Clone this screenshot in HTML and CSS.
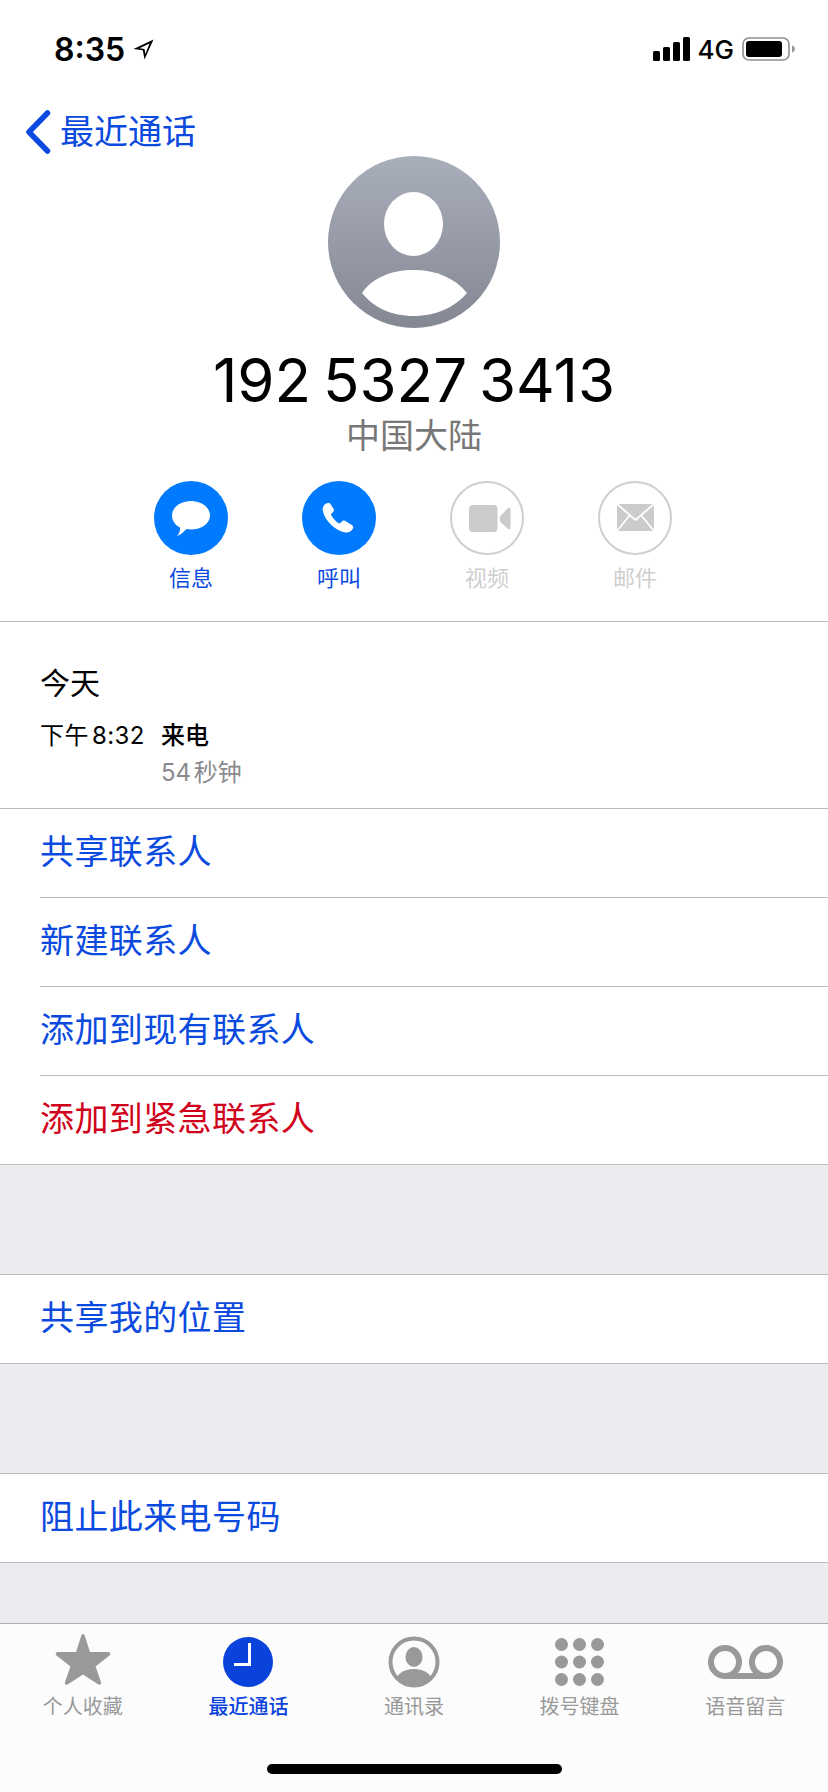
FILE: index.html
```html
<!DOCTYPE html>
<html lang="zh-CN">
<head>
    <meta charset="UTF-8">
    <title>最近通话</title>
    <link rel="stylesheet" href="styles.css">
</head>
<body>
    <div class="page">
        <div class="status-bar">
            <div class="status-left">
                <span class="clock">8:35</span>
                <svg class="loc" width="21" height="21" viewBox="0 0 21 21"><path d="M20.500 .5 L.5 10 L9.800 11.200 L11.500 20.500 Z M16.500 4.500 L6.500 9.300 L11.500 9.900 L12.400 15 Z" fill="#000" fill-rule="evenodd"/></svg>
            </div>
            <div class="status-right">
                <svg width="37" height="24" viewBox="0 0 37 24"><rect x="0" y="14" width="7" height="10" rx="1.5"/><rect x="10" y="10" width="7" height="14" rx="1.5"/><rect x="20" y="5" width="7" height="19" rx="1.5"/><rect x="30" y="0" width="7" height="24" rx="1.5"/></svg>
                <span class="net">4G</span>
                <svg width="53" height="24" viewBox="0 0 53 24"><rect x="1" y="1" width="46" height="22" rx="6" fill="none" stroke="#8e8e8e" stroke-width="1.6"/><rect x="4" y="4" width="36" height="16" rx="3"/><path d="M50 8.500 c2 .6 3 2 3 3.500 s-1 2.900-3 3.500z" fill="#9a9a9a"/></svg>
            </div>
        </div>

        <div class="nav">
            <svg width="26" height="44" viewBox="0 0 26 44"><path d="M22.500 3 L4 22 L22.500 41" fill="none" stroke="#0a4adf" stroke-width="5.500" stroke-linecap="round" stroke-linejoin="round"/></svg>
            <span class="nav-title">最近通话</span>
        </div>

        <div class="header">
            <svg class="avatar" width="172" height="172" viewBox="0 0 172 172">
                <defs>
                    <linearGradient id="avatarBg" x1="0" y1="0" x2="0" y2="1">
                        <stop offset="0" stop-color="#a9aebb"/>
                        <stop offset="1" stop-color="#848893"/>
                    </linearGradient>
                </defs>
                <circle cx="86" cy="86" r="86" fill="url(#avatarBg)"/>
                <ellipse cx="85.500" cy="68" rx="29.500" ry="32" fill="#fff"/>
                <path d="M34 137 C44 122 63 114 85.500 114 C108 114 127 122 139 137 C127 151 108 160 85.500 160 C63 160 45 151 34 137 Z" fill="#fff"/>
            </svg>
            <div class="number">192 5327 3413</div>
            <div class="region">中国大陆</div>
            <div class="actions">
                <div class="action">
                    <svg width="74" height="74" viewBox="0 0 74 74"><circle cx="37" cy="37" r="37" fill="#007aff"/><path d="M37 20 C47.500 20 56 26.500 56 34.500 C56 42.500 47.500 48.500 37 48.500 C35.500 48.500 34 48.400 32.500 48.100 C30 50.500 26.500 54.500 23 54.800 C25 52.800 26.500 49.500 26 46.500 C21 44 18 39.500 18 34.500 C18 26.500 26.500 20 37 20 Z" fill="#fff"/></svg>
                    <span class="action-label">信息</span>
                </div>
                <div class="action">
                    <svg width="74" height="74" viewBox="0 0 74 74"><circle cx="37" cy="37" r="37" fill="#007aff"/><path d="M25 22.500 c1.500-.8 3-.3 3.800 1 l2.700 4.200 c.7 1.100 .5 2.400 -.4 3.300 l-1.600 1.500 c-.5 .5 -.5 1.100 -.2 1.700 c1.600 3 4.500 6.300 7.400 8 c.6 .3 1.200 .2 1.700 -.3 l1.500 -1.500 c.9 -.9 2.200 -1 3.300 -.4 l6.700 4 c1.300 .8 1.700 2.400 .9 3.700 c-1.500 2.600 -4 4.300 -7.500 3.800 c-10 -1.500 -20.500 -12 -22.500 -21.500 c-.7 -3.300 1.200 -6.400 3.600 -7.700 z" fill="#fff"/></svg>
                    <span class="action-label">呼叫</span>
                </div>
                <div class="action off">
                    <svg width="74" height="74" viewBox="0 0 74 74"><circle cx="37" cy="37" r="36" fill="#fff" stroke="#cfcfcf" stroke-width="2"/><rect x="19" y="24" width="28.500" height="27" rx="4" fill="#cbcbcd"/><path d="M50 35.500 L57.500 27.500 C59 26 60.500 27 60.500 28.500 V46.500 C60.500 48 59 49 57.500 47.500 L50 40.500 Z" fill="#cbcbcd"/></svg>
                    <span class="action-label">视频</span>
                </div>
                <div class="action off">
                    <svg width="74" height="74" viewBox="0 0 74 74"><circle cx="37" cy="37" r="36" fill="#fff" stroke="#cfcfcf" stroke-width="2"/><rect x="19" y="23" width="37" height="27" fill="#cbcbcd"/><path d="M19 23 L37.500 39 L56 23 M19 50 L31.500 34.500 M56 50 L43.500 34.500" fill="none" stroke="#fff" stroke-width="1.800"/></svg>
                    <span class="action-label">邮件</span>
                </div>
            </div>
        </div>

        <div class="history">
            <div class="history-date">今天</div>
            <div class="history-row">
                <span class="history-time">下午 8:32</span>
                <div>
                    <div class="history-type">来电</div>
                    <div class="history-len">54 秒钟</div>
                </div>
            </div>
        </div>

        <div class="list">
            <div class="row"><div class="row-text">共享联系人</div></div>
            <div class="row"><div class="row-text">新建联系人</div></div>
            <div class="row"><div class="row-text">添加到现有联系人</div></div>
            <div class="row"><div class="row-text danger">添加到紧急联系人</div></div>
        </div>
        <div class="gap"></div>
        <div class="list">
            <div class="row"><div class="row-text">共享我的位置</div></div>
        </div>
        <div class="gap"></div>
        <div class="list">
            <div class="row"><div class="row-text">阻止此来电号码</div></div>
        </div>
        <div class="gap gap-last"></div>

        <div class="tabbar">
            <div class="tabs">
                <div class="tab">
                    <div class="tab-icon">
                        <svg class="star" width="56" height="52" viewBox="0 0 56 52"><path d="M28 0 C29 0 29.600 1 30 2.500 L35 18 L52.500 18 C55.500 18 56 20 54.500 21.500 L40.500 32.500 L46 48 C46.700 50.300 45 51.500 43 50.300 L28 40.500 L13 50.300 C11 51.500 9.300 50.300 10 48 L15.500 32.500 L1.500 21.500 C0 20 .5 18 3.500 18 L21 18 L26 2.500 C26.400 1 27 0 28 0 Z" fill="#999"/></svg>
                    </div>
                    <span class="tab-label">个人收藏</span>
                </div>
                <div class="tab active">
                    <div class="tab-icon">
                        <svg width="50" height="50" viewBox="0 0 50 50"><circle cx="25" cy="25" r="25" fill="#0a43dc"/><path d="M26.500 6 V27.500 H11" fill="none" stroke="#fff" stroke-width="3"/></svg>
                    </div>
                    <span class="tab-label">最近通话</span>
                </div>
                <div class="tab">
                    <div class="tab-icon">
                        <svg width="52" height="52" viewBox="0 0 52 52"><defs><clipPath id="ringClip"><circle cx="26" cy="26" r="23"/></clipPath></defs><circle cx="26" cy="26" r="23.500" fill="none" stroke="#999" stroke-width="4"/><ellipse cx="26" cy="21" rx="8.500" ry="10" fill="#999"/><ellipse cx="26" cy="47" rx="19" ry="14" fill="#999" clip-path="url(#ringClip)"/></svg>
                    </div>
                    <span class="tab-label">通讯录</span>
                </div>
                <div class="tab">
                    <div class="tab-icon">
                        <svg width="49" height="48" viewBox="0 0 49 48"><g fill="#999"><circle cx="6.500" cy="6.500" r="6.500"/><circle cx="24.500" cy="6.500" r="6.500"/><circle cx="42.500" cy="6.500" r="6.500"/><circle cx="6.500" cy="24" r="6.500"/><circle cx="24.500" cy="24" r="6.500"/><circle cx="42.500" cy="24" r="6.500"/><circle cx="6.500" cy="41.500" r="6.500"/><circle cx="24.500" cy="41.500" r="6.500"/><circle cx="42.500" cy="41.500" r="6.500"/></g></svg>
                    </div>
                    <span class="tab-label">拨号键盘</span>
                </div>
                <div class="tab">
                    <div class="tab-icon">
                        <svg width="75" height="34" viewBox="0 0 75 34"><g fill="none" stroke="#999" stroke-width="6"><circle cx="17" cy="17" r="14"/><circle cx="58" cy="17" r="14"/><path d="M17 31 H58"/></g></svg>
                    </div>
                    <span class="tab-label">语音留言</span>
                </div>
            </div>
            <div class="home-bar"></div>
        </div>
    </div>
</body>
</html>
```

FILE: styles.css
```css
body {
    margin: 0;
    background-color: #fff;
    font-family: "Liberation Sans", "Noto Sans CJK SC", sans-serif;
}
.page {
    display: flex;
    flex-direction: column;
    width: 828px;
    height: 1792px;
    overflow: hidden;
}
.status-bar {
    display: flex;
    justify-content: space-between;
    align-items: center;
    box-sizing: border-box;
    height: 108px;
    padding: 0 33px 10px 54px;
}
.status-left, .status-right {
    display: flex;
    align-items: center;
}
.clock {
    font-family: Inter, "Liberation Sans", sans-serif;
    font-size: 32px;
    font-weight: 600;
    color: #000;
}
.loc {
    margin-left: 8px;
}
.net {
    margin: 0 8px 0 8px;
    font-family: Inter, "Liberation Sans", sans-serif;
    font-size: 26px;
    font-weight: 500;
    color: #000;
}
.nav {
    display: flex;
    align-items: center;
    height: 48px;
    padding-left: 25px;
}
.nav-title {
    margin-left: 9px;
    font-size: 34px;
    line-height: 48px;
    color: #0a4adf;
}
.header {
    display: flex;
    flex-direction: column;
    align-items: center;
    padding-bottom: 27px;
    border-bottom: 1px solid #bcbcc0;
}
.avatar {
    display: block;
}
.number {
    margin-top: 16px;
    font-family: Inter, "Liberation Sans", sans-serif;
    font-size: 60px;
    word-spacing: -5px;
    line-height: 72px;
    color: #000;
}
.region {
    font-size: 34px;
    line-height: 40px;
    color: #777;
}
.actions {
    display: flex;
    margin-top: 25px;
    padding-right: 2px;
}
.action {
    display: flex;
    flex-direction: column;
    align-items: center;
    width: 148px;
}
.action-label {
    margin-top: 9px;
    font-size: 22px;
    line-height: 30px;
    color: #0a4adf;
}
.action.off .action-label {
    color: #cfcfcf;
}
.history {
    padding: 42px 40px 17px;
}
.history-date {
    font-size: 30px;
    line-height: 40px;
    color: #000;
}
.history-row {
    display: flex;
    margin-top: 14px;
    font-family: Inter, "Noto Sans CJK SC", sans-serif;
    font-size: 24px;
    word-spacing: -4px;
    line-height: 36px;
}
.history-time {
    width: 121px;
    letter-spacing: 0.4px;
    color: #000;
}
.history-type {
    font-weight: 500;
    color: #000;
}
.history-len {
    margin-top: 1px;
    color: #8a8a8e;
}
.list {
    border-top: 1px solid #bcbcc0;
    border-bottom: 1px solid #bcbcc0;
    background-color: #fff;
}
.row {
    padding-left: 40px;
}
.row-text {
    height: 88px;
    border-bottom: 1px solid #bcbcc0;
    font-size: 34px;
    letter-spacing: 0.4px;
    line-height: 86px;
    color: #0a4adf;
}
.row:last-child .row-text {
    border-bottom: none;
}
.row-text.danger {
    color: #d0021b;
}
.gap {
    height: 109px;
    background-color: #ebebf0;
}
.gap-last {
    flex: 1;
    height: auto;
}
.tabbar {
    height: 168px;
    border-top: 1px solid #aeaeb2;
    background-color: #fcfcfc;
}
.tabs {
    display: grid;
    grid-template-columns: repeat(5, 1fr);
    padding-top: 10px;
}
.tab {
    display: flex;
    flex-direction: column;
    align-items: center;
}
.tab-icon {
    display: flex;
    justify-content: center;
    align-items: center;
    height: 56px;
}
.star {
    margin-bottom: 4px;
}
.tab-label {
    margin-top: 3px;
    font-size: 20px;
    line-height: 28px;
    color: #999;
}
.tab.active .tab-label {
    font-weight: 500;
    color: #0a43dc;
}
.home-bar {
    width: 295px;
    height: 10px;
    margin: 43px auto 0;
    border-radius: 5px;
    background-color: #000;
}
```
